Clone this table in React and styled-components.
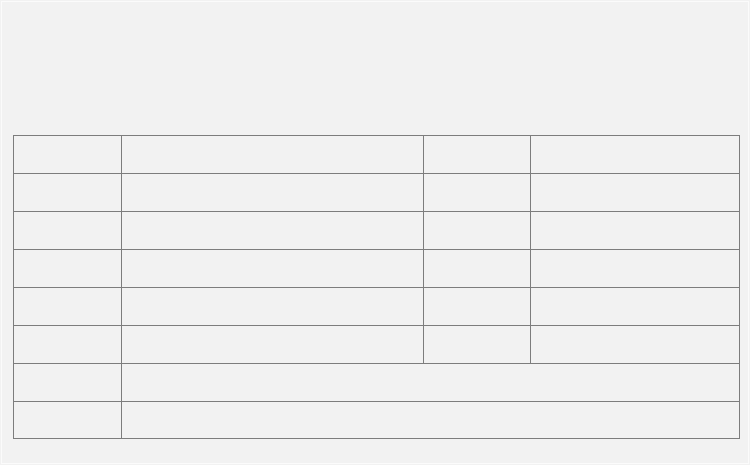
import React from "react";
import styled, { createGlobalStyle } from "styled-components";

const GlobalStyle = createGlobalStyle`
  html, body {
    margin: 0;
    padding: 0;
    background: #f2f2f2;
    font-family: "Liberation Sans", Arial, sans-serif;
  }
`;

const rows = [
  { split: true },
  { split: true },
  { split: true },
  { split: true },
  { split: true },
  { split: true },
  { split: false },
  { split: false, short: true },
];

export default function App() {
  return (
    <Page>
      <GlobalStyle />
      <Grid>
        <colgroup>
          <col style={{ width: 108 }} />
          <col style={{ width: 302 }} />
          <col style={{ width: 107 }} />
          <col style={{ width: 209 }} />
        </colgroup>
        <tbody>
          {rows.map((r, i) =>
            r.split ? (
              <Row key={i} $short={r.short}>
                <Cell />
                <Cell />
                <Cell />
                <Cell />
              </Row>
            ) : (
              <Row key={i} $short={r.short}>
                <Cell />
                <Cell colSpan={3} />
              </Row>
            )
          )}
        </tbody>
      </Grid>
    </Page>
  );
}

const Page = styled.div`
  box-sizing: border-box;
  width: 750px;
  height: 465px;
  padding: 135px 0 0 13px;
  box-shadow: inset 0 0 0 1px #f2f2f2, inset 0 0 0 2px #fbfbfb;
`;

const Grid = styled.table`
  table-layout: fixed;
  border-collapse: collapse;
  width: 726px;
`;

const Row = styled.tr`
  height: ${(p) => (p.$short ? "37px" : "38px")};
`;

const Cell = styled.td`
  border: 1px solid #7d7d7d;
  padding: 0;
`;
